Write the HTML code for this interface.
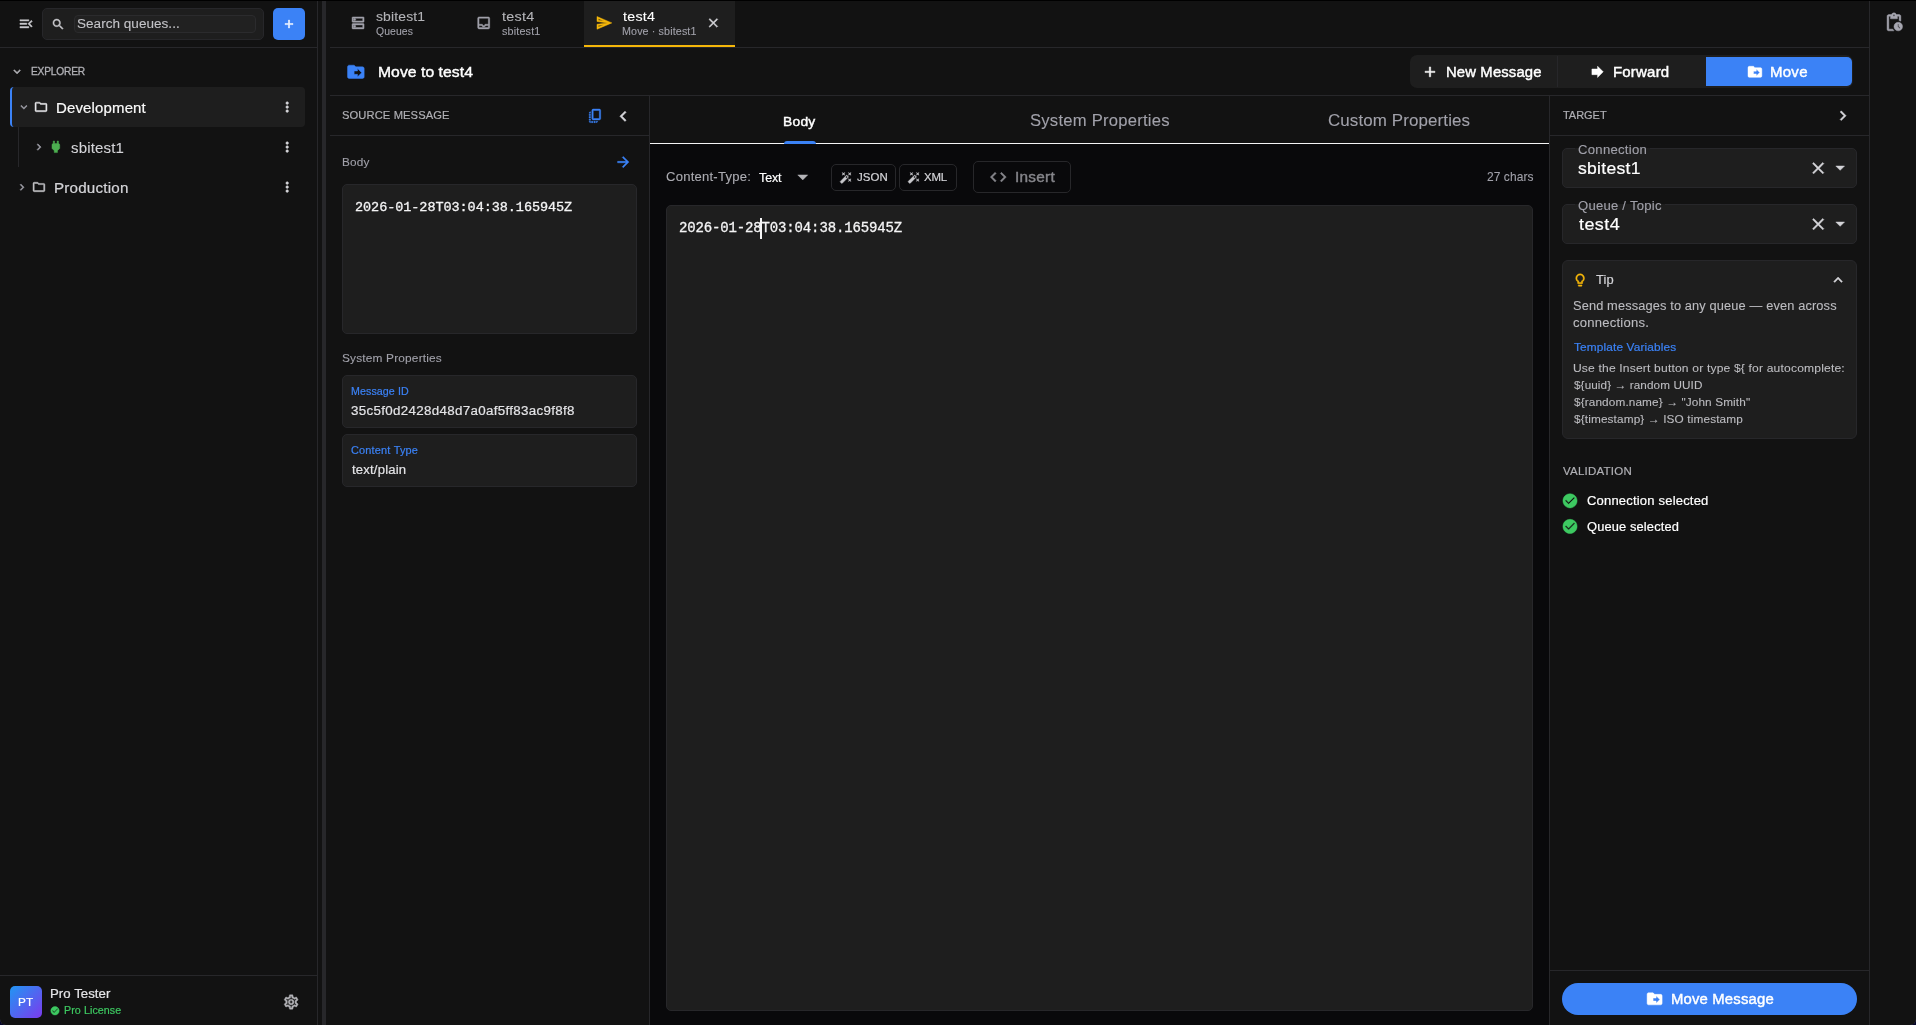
<!DOCTYPE html>
<html lang="en"><head><meta charset="utf-8"><title>Move to test4</title>
<style>
html{margin:0;padding:0;background:#06062a;}
body{margin:0;padding:0;background:#121212;border-radius:0 0 6px 6px;width:1916px;height:1025px;position:relative;overflow:hidden;font-family:"Liberation Sans", sans-serif;color:#fff;}
.b{position:absolute;box-sizing:border-box;}
.t{position:absolute;white-space:pre;line-height:1;margin:0;will-change:transform;}
.m{font-family:"Liberation Mono", monospace;}
svg{position:absolute;display:block;}
.icons path{stroke-width:.45px;vector-effect:non-scaling-stroke;stroke-linejoin:round;}
</style></head><body>
<div class="b" style="left:0px;top:0px;width:1916px;height:1px;background:#000;"></div>
<div class="b" style="left:317px;top:1px;width:1px;height:1024px;background:#27272a;"></div>
<div class="b" style="left:0px;top:47px;width:317px;height:1px;background:#27272a;"></div>
<div class="b" style="left:42px;top:7.5px;width:222px;height:32px;background:#1e1e1e;border:1px solid #27272a;border-radius:5px;"></div>
<div class="b" style="left:73.5px;top:14.5px;width:182px;height:18px;background:#212121;border:1px solid #2b2b2d;border-radius:4px;"></div>
<div class="b" style="left:273px;top:7.5px;width:32px;height:32px;background:#3b82f6;border-radius:5px;"></div>
<div class="b" style="left:10px;top:87px;width:295px;height:40px;background:#1e1e1e;border-radius:4px;border-left:2px solid #3b82f6;"></div>
<div class="b" style="left:18px;top:127px;width:1px;height:40px;background:#27272a;"></div>
<div class="b" style="left:0px;top:975px;width:317px;height:1px;background:#27272a;"></div>
<div class="b" style="left:10px;top:985.5px;width:32px;height:32px;background:linear-gradient(135deg,#2196f3 0%,#7c3aed 100%);border-radius:5px;"></div>
<div class="b" style="left:322px;top:1px;width:4px;height:1024px;background:#27272a;"></div>
<div class="b" style="left:330px;top:47px;width:1539px;height:1px;background:#27272a;"></div>
<div class="b" style="left:584px;top:1px;width:150.5px;height:46px;background:#1e1e1e;"></div>
<div class="b" style="left:584px;top:45px;width:150.5px;height:2px;background:#f5b70a;"></div>
<div class="b" style="left:330px;top:95px;width:1539px;height:1px;background:#27272a;"></div>
<div class="b" style="left:1410px;top:55px;width:443px;height:33px;background:#1e1e1e;border-radius:7px;"></div>
<div class="b" style="left:1557px;top:56px;width:1px;height:31px;background:#27272a;"></div>
<div class="b" style="left:1706px;top:57px;width:146px;height:29px;background:#3b82f6;border-radius:0 5px 5px 0;"></div>
<div class="b" style="left:649px;top:96px;width:1px;height:929px;background:#27272a;"></div>
<div class="b" style="left:330px;top:135px;width:319px;height:1px;background:#27272a;"></div>
<div class="b" style="left:342px;top:184px;width:295px;height:149.5px;background:#1e1e1e;border:1px solid #27272a;border-radius:5px;"></div>
<div class="b" style="left:342px;top:375px;width:295px;height:53px;background:#1e1e1e;border:1px solid #27272a;border-radius:5px;"></div>
<div class="b" style="left:342px;top:434px;width:295px;height:52.5px;background:#1e1e1e;border:1px solid #27272a;border-radius:5px;"></div>
<div class="b" style="left:650px;top:144px;width:899px;height:881px;background:#09090b;"></div>
<div class="b" style="left:650px;top:143px;width:899px;height:1px;background:#f4f4f5;"></div>
<div class="b" style="left:784px;top:141px;width:32px;height:3px;background:#3b82f6;border-radius:3px 3px 0 0;"></div>
<div class="b" style="left:831px;top:164px;width:65px;height:26.5px;border:1px solid #27272a;border-radius:5px;"></div>
<div class="b" style="left:899px;top:164px;width:57.5px;height:26.5px;border:1px solid #27272a;border-radius:5px;"></div>
<div class="b" style="left:973px;top:161px;width:98px;height:32px;border:1px solid #27272a;border-radius:5px;"></div>
<div class="b" style="left:666px;top:205px;width:867px;height:805.5px;background:#1e1e1e;border:1px solid #27272a;border-radius:5px;"></div>
<div class="b" style="left:760px;top:217.5px;width:2px;height:21px;background:#f4f4f5;"></div>
<div class="b" style="left:1549px;top:96px;width:1px;height:929px;background:#27272a;"></div>
<div class="b" style="left:1550px;top:135px;width:319px;height:1px;background:#27272a;"></div>
<div class="b" style="left:1562px;top:148px;width:295px;height:40px;background:#1e1e1e;border:1px solid #27272a;border-radius:5px;"></div>
<div class="b" style="left:1562px;top:204px;width:295px;height:40px;background:#1e1e1e;border:1px solid #27272a;border-radius:5px;"></div>
<div class="b" style="left:1562px;top:260px;width:295px;height:178.5px;background:#1e1e1e;border:1px solid #27272a;border-radius:6px;"></div>
<div class="b" style="left:1550px;top:970px;width:319px;height:1px;background:#27272a;"></div>
<div class="b" style="left:1562px;top:983px;width:295px;height:32px;background:#3b82f6;border-radius:16px;"></div>
<div class="b" style="left:1574.5px;top:148px;width:75px;height:1px;background:#1e1e1e;"></div>
<div class="b" style="left:1574.5px;top:204px;width:90px;height:1px;background:#1e1e1e;"></div>
<div class="b" style="left:1869px;top:1px;width:1px;height:1024px;background:#27272a;"></div>
<div class="b" style="left:-1px;top:1005px;width:21px;height:21px;border:1px solid #55555a;border-top:none;border-right:none;border-radius:0 0 0 7px;"></div>
<div class="b" style="left:1896px;top:1005px;width:21px;height:21px;border:1px solid #55555a;border-top:none;border-left:none;border-radius:0 0 7px 0;"></div>
<svg class="icons" width="1916" height="1025" viewBox="0 0 1916 1025" style="left:0;top:0">
<path fill="#c8c8cc" stroke="#c8c8cc" transform="translate(17.86 15.54) scale(0.6875)" d="M3 18h13v-2H3v2zm0-5h10v-2H3v2zm0-7v2h13V6H3zm18 9.59L17.42 12 21 8.41 19.59 7l-5 5 5 5L21 15.59z"/>
<path fill="#c8c8cc" stroke="#c8c8cc" transform="translate(51.13 17.31) scale(0.5875)" d="M15.5 14h-.79l-.28-.27C15.41 12.59 16 11.11 16 9.5 16 5.91 13.09 3 9.5 3S3 5.91 3 9.5 5.91 16 9.5 16c1.61 0 3.09-.59 4.23-1.57l.27.28v.79l5 4.99L20.49 19l-4.99-5zm-6 0C7.01 14 5 11.99 5 9.5S7.01 5 9.5 5 14 7.01 14 9.5 11.99 14 9.5 14z"/>
<path fill="#fff" stroke="#fff" transform="translate(282.21 17.25) scale(0.5667)" d="M19 13h-6v6h-2v-6H5v-2h6V5h2v6h6v2z"/>
<path fill="#b0b0b5" stroke="#b0b0b5" transform="translate(10.06 64.63) scale(0.5833)" d="M16.59 8.59L12 13.17 7.41 8.59 6 10l6 6 6-6z"/>
<path fill="#a1a1aa" stroke="#a1a1aa" transform="translate(17.4 100.61) scale(0.5417)" d="M16.59 8.59L12 13.17 7.41 8.59 6 10l6 6 6-6z"/>
<path fill="#e4e4e7" stroke="#e4e4e7" transform="translate(33.8 99.73) scale(0.6)" d="M9.17 6l2 2H20v10H4V6h5.17M10 4H4c-1.1 0-1.99.9-1.99 2L2 18c0 1.1.9 2 2 2h16c1.1 0 2-.9 2-2V8c0-1.1-.9-2-2-2h-8l-2-2z"/>
<path fill="#d4d4d8" stroke="#d4d4d8" transform="translate(279.19 99.09) scale(0.6667)" d="M12 8c1.1 0 2-.9 2-2s-.9-2-2-2-2 .9-2 2 .9 2 2 2zm0 2c-1.1 0-2 .9-2 2s.9 2 2 2 2-.9 2-2-.9-2-2-2zm0 6c-1.1 0-2 .9-2 2s.9 2 2 2 2-.9 2-2-.9-2-2-2z"/>
<path fill="#a1a1aa" stroke="#a1a1aa" transform="translate(32.44 140.61) scale(0.5417)" d="M10 6L8.59 7.41 13.17 12l-4.58 4.59L10 18l6-6z"/>
<path fill="#4caf50" stroke="#4caf50" transform="translate(48.1 139.04) scale(0.6458)" d="M16.01 7L16 3h-2v4h-4V3H8v4h-.01C7 6.99 6 7.99 6 8.99v5.49L9.5 18v3h5v-3l3.5-3.51v-5.5c0-1-1-2-1.99-1.99z"/>
<path fill="#d4d4d8" stroke="#d4d4d8" transform="translate(279.19 139.09) scale(0.6667)" d="M12 8c1.1 0 2-.9 2-2s-.9-2-2-2-2 .9-2 2 .9 2 2 2zm0 2c-1.1 0-2 .9-2 2s.9 2 2 2 2-.9 2-2-.9-2-2-2zm0 6c-1.1 0-2 .9-2 2s.9 2 2 2 2-.9 2-2-.9-2-2-2z"/>
<path fill="#a1a1aa" stroke="#a1a1aa" transform="translate(15.46 180.71) scale(0.5417)" d="M10 6L8.59 7.41 13.17 12l-4.58 4.59L10 18l6-6z"/>
<path fill="#c4c4c8" stroke="#c4c4c8" transform="translate(31.85 179.88) scale(0.5917)" d="M9.17 6l2 2H20v10H4V6h5.17M10 4H4c-1.1 0-1.99.9-1.99 2L2 18c0 1.1.9 2 2 2h16c1.1 0 2-.9 2-2V8c0-1.1-.9-2-2-2h-8l-2-2z"/>
<path fill="#d4d4d8" stroke="#d4d4d8" transform="translate(279.19 179.09) scale(0.6667)" d="M12 8c1.1 0 2-.9 2-2s-.9-2-2-2-2 .9-2 2 .9 2 2 2zm0 2c-1.1 0-2 .9-2 2s.9 2 2 2 2-.9 2-2-.9-2-2-2zm0 6c-1.1 0-2 .9-2 2s.9 2 2 2 2-.9 2-2-.9-2-2-2z"/>
<path fill="#3dc961" stroke="#3dc961" transform="translate(49.96 1005.73) scale(0.4208)" d="M12 2C6.48 2 2 6.48 2 12s4.48 10 10 10 10-4.48 10-10S17.52 2 12 2zm-2 15l-5-5 1.41-1.41L10 14.17l7.59-7.59L19 8l-9 9z"/>
<path fill="#b4b4b8" stroke="#b4b4b8" transform="translate(282.56 993.4) scale(0.7167)" d="M19.43 12.98c.04-.32.07-.64.07-.98 0-.34-.03-.66-.07-.98l2.11-1.65c.19-.15.24-.42.12-.64l-2-3.46c-.09-.16-.26-.25-.44-.25-.06 0-.12.01-.17.03l-2.49 1c-.52-.4-1.08-.73-1.69-.98l-.38-2.65C14.46 2.18 14.25 2 14 2h-4c-.25 0-.46.18-.49.42l-.38 2.65c-.61.25-1.17.59-1.69.98l-2.49-1c-.06-.02-.12-.03-.18-.03-.17 0-.34.09-.43.25l-2 3.46c-.13.22-.07.49.12.64l2.11 1.65c-.04.32-.07.65-.07.98 0 .33.03.66.07.98l-2.11 1.65c-.19.15-.24.42-.12.64l2 3.46c.09.16.26.25.44.25.06 0 .12-.01.17-.03l2.49-1c.52.4 1.08.73 1.69.98l.38 2.65c.03.24.24.42.49.42h4c.25 0 .46-.18.49-.42l.38-2.65c.61-.25 1.17-.59 1.69-.98l2.49 1c.06.02.12.03.18.03.17 0 .34-.09.43-.25l2-3.46c.12-.22.07-.49-.12-.64l-2.11-1.65zm-1.98-1.71c.04.31.05.52.05.73 0 .21-.02.43-.05.73l-.14 1.13.89.7 1.08.84-.7 1.21-1.27-.51-1.04-.42-.9.68c-.43.32-.84.56-1.25.73l-1.06.43-.16 1.13-.2 1.35h-1.4l-.19-1.35-.16-1.13-1.06-.43c-.43-.18-.83-.41-1.23-.71l-.91-.7-1.06.43-1.27.51-.7-1.21 1.08-.84.89-.7-.14-1.13c-.03-.31-.05-.54-.05-.74s.02-.43.05-.73l.14-1.13-.89-.7-1.08-.84.7-1.21 1.27.51 1.04.42.9-.68c.43-.32.84-.56 1.25-.73l1.06-.43.16-1.13.2-1.35h1.39l.19 1.35.16 1.13 1.06.43c.43.18.83.41 1.23.71l.91.7 1.06-.43 1.27-.51.7 1.21-1.07.85-.89.7.14 1.13zM12 8c-2.21 0-4 1.79-4 4s1.79 4 4 4 4-1.79 4-4-1.79-4-4-4zm0 6c-1.1 0-2-.9-2-2s.9-2 2-2 2 .9 2 2-.9 2-2 2z"/>
<path fill="#a1a1aa" stroke="#a1a1aa" transform="translate(350.06 14.91) scale(0.6667)" d="M19 15v4H5v-4h14m1-2H4c-.55 0-1 .45-1 1v6c0 .55.45 1 1 1h16c.55 0 1-.45 1-1v-6c0-.55-.45-1-1-1zM7 18.5c-.82 0-1.5-.67-1.5-1.5s.68-1.5 1.5-1.5 1.5.67 1.5 1.5-.67 1.5-1.5 1.5zM19 5v4H5V5h14m1-2H4c-.55 0-1 .45-1 1v6c0 .55.45 1 1 1h16c.55 0 1-.45 1-1V4c0-.55-.45-1-1-1zM7 8.5c-.82 0-1.5-.67-1.5-1.5S6.18 5.5 7 5.5s1.5.68 1.5 1.5S7.83 8.5 7 8.5z"/>
<path fill="#a1a1aa" stroke="#a1a1aa" transform="translate(475.69 14.91) scale(0.6667)" d="M19 3H5c-1.1 0-2 .9-2 2v14c0 1.1.89 2 2 2h14c1.1 0 2-.9 2-2V5c0-1.1-.9-2-2-2zm0 16H5v-3h3.56c.69 1.19 1.97 2 3.45 2s2.75-.81 3.45-2H19v3zm0-5h-4.99c0 1.1-.9 2-2 2s-2-.9-2-2H5V5h14v9z"/>
<path fill="#f5b70a" stroke="#f5b70a" transform="translate(595.57 14.39) scale(0.7083)" d="M4.01 6.03l7.51 3.22-7.52-1 .01-2.22m7.5 8.72L4 17.97v-2.22l7.51-1M2.01 3L2 10l15 2-15 2 .01 7L23 12 2.01 3z"/>
<path fill="#d4d4d8" stroke="#d4d4d8" transform="translate(705.87 15.4) scale(0.625)" d="M19 6.41L17.59 5 12 10.59 6.41 5 5 6.41 10.59 12 5 17.59 6.41 19 12 13.41 17.59 19 19 17.59 13.41 12z"/>
<path fill="#3b82f6" stroke="#3b82f6" transform="translate(345.85 61.83) scale(0.8333)" d="M20 6h-8l-2-2H4c-1.1 0-2 .9-2 2v12c0 1.1.9 2 2 2h16c1.1 0 2-.9 2-2V8c0-1.1-.9-2-2-2zm-6 12v-3h-4v-4h4V8l5 5-5 5z"/>
<path fill="#fff" stroke="#fff" transform="translate(1421.5 63.38) scale(0.7083)" d="M19 13h-6v6h-2v-6H5v-2h6V5h2v6h6v2z"/>
<path fill="#fff" stroke="#fff" transform="translate(1589.07 63.33) scale(0.7083)" d="M12 8V4l8 8-8 8v-4H4V8z"/>
<path fill="#fff" stroke="#fff" transform="translate(1746.62 63.53) scale(0.6917)" d="M20 6h-8l-2-2H4c-1.1 0-2 .9-2 2v12c0 1.1.9 2 2 2h16c1.1 0 2-.9 2-2V8c0-1.1-.9-2-2-2zm-6 12v-3h-4v-4h4V8l5 5-5 5z"/>
<path fill="#3b82f6" stroke="#3b82f6" transform="translate(587.1 107.71) scale(0.6792)" d="M18 2H9c-1.1 0-2 .9-2 2v12c0 1.1.9 2 2 2h9c1.1 0 2-.9 2-2V4c0-1.1-.9-2-2-2zm0 14H9V4h9v12zM3 15v-2h2v2H3zm0-5.5h2v2H3v-2zM10 20h2v2h-2v-2zm-7-1.5v-2h2v2H3zM5 22c-1.1 0-2-.9-2-2h2v2zm3.5 0h-2v-2h2v2zm5 0v-2h2c0 1.1-.9 2-2 2zM5 6v2H3c0-1.1.9-2 2-2z"/>
<path fill="#d4d4d8" stroke="#d4d4d8" transform="translate(613 106) scale(0.8542)" d="M15.41 7.41L14 6l-6 6 6 6 1.41-1.41L10.83 12z"/>
<path fill="#3b82f6" stroke="#3b82f6" transform="translate(614.76 153.58) scale(0.7083)" d="M12 4l-1.41 1.41L16.17 11H4v2h12.17l-5.58 5.59L12 20l8-8z"/>
<path fill="#b4b4b8" stroke="#b4b4b8" transform="translate(790.73 164.9) scale(1)" d="M7 10l5 5 5-5z"/>
<path fill="#c8c8cc" stroke="#c8c8cc" transform="translate(839.63 171.58) scale(0.5167)" d="M7.5 5.6L10 7 8.6 4.5 10 2 7.5 3.4 5 2l1.4 2.5L5 7zm12 9.8L17 14l1.4 2.5L17 19l2.5-1.4L22 19l-1.4-2.5L22 14zM22 2l-2.5 1.4L17 2l1.4 2.5L17 7l2.5-1.4L22 7l-1.4-2.5zm-7.63 5.29c-.39-.39-1.02-.39-1.41 0L1.29 18.96c-.39.39-.39 1.02 0 1.41l2.34 2.34c.39.39 1.02.39 1.41 0L16.7 11.05c.39-.39.39-1.02 0-1.41l-2.33-2.35zm-1.03 5.49l-2.12-2.12 2.44-2.44 2.12 2.12-2.44 2.44z"/>
<path fill="#c8c8cc" stroke="#c8c8cc" transform="translate(907.62 171.54) scale(0.5167)" d="M7.5 5.6L10 7 8.6 4.5 10 2 7.5 3.4 5 2l1.4 2.5L5 7zm12 9.8L17 14l1.4 2.5L17 19l2.5-1.4L22 19l-1.4-2.5L22 14zM22 2l-2.5 1.4L17 2l1.4 2.5L17 7l2.5-1.4L22 7l-1.4-2.5zm-7.63 5.29c-.39-.39-1.02-.39-1.41 0L1.29 18.96c-.39.39-.39 1.02 0 1.41l2.34 2.34c.39.39 1.02.39 1.41 0L16.7 11.05c.39-.39.39-1.02 0-1.41l-2.33-2.35zm-1.03 5.49l-2.12-2.12 2.44-2.44 2.12 2.12-2.44 2.44z"/>
<path fill="#85858a" stroke="#85858a" transform="translate(988.68 167.5) scale(0.8)" d="M9.4 16.6L4.8 12l4.6-4.6L8 6l-6 6 6 6 1.4-1.4zm5.2 0l4.6-4.6-4.6-4.6L16 6l6 6-6 6-1.4-1.4z"/>
<path fill="#d4d4d8" stroke="#d4d4d8" transform="translate(1833.14 105.96) scale(0.8125)" d="M10 6L8.59 7.41 13.17 12l-4.58 4.59L10 18l6-6z"/>
<path fill="#d4d4d8" stroke="#d4d4d8" transform="translate(1808.45 158.41) scale(0.8125)" d="M19 6.41L17.59 5 12 10.59 6.41 5 5 6.41 10.59 12 5 17.59 6.41 19 12 13.41 17.59 19 19 17.59 13.41 12z"/>
<path fill="#d4d4d8" stroke="#d4d4d8" transform="translate(1829.66 157.24) scale(0.875)" d="M7 10l5 5 5-5z"/>
<path fill="#d4d4d8" stroke="#d4d4d8" transform="translate(1808.45 214.41) scale(0.8125)" d="M19 6.41L17.59 5 12 10.59 6.41 5 5 6.41 10.59 12 5 17.59 6.41 19 12 13.41 17.59 19 19 17.59 13.41 12z"/>
<path fill="#d4d4d8" stroke="#d4d4d8" transform="translate(1829.66 213.24) scale(0.875)" d="M7 10l5 5 5-5z"/>
<path fill="#f5b70a" stroke="#f5b70a" transform="translate(1572.62 272.57) scale(0.625)" d="M9 21c0 .55.45 1 1 1h4c.55 0 1-.45 1-1v-1H9v1zm3-19C8.14 2 5 5.14 5 9c0 2.38 1.19 4.47 3 5.74V17c0 .55.45 1 1 1h6c.55 0 1-.45 1-1v-2.26c1.81-1.27 3-3.36 3-5.74 0-3.86-3.14-7-7-7zm2.85 11.1l-.85.6V16h-4v-2.3l-.85-.6C7.8 12.16 7 10.63 7 9c0-2.76 2.24-5 5-5s5 2.24 5 5c0 1.63-.8 3.16-2.15 4.1z"/>
<path fill="#d4d4d8" stroke="#d4d4d8" transform="translate(1829.33 271.17) scale(0.7292)" d="M12 8l-6 6 1.41 1.41L12 10.83l4.59 4.58L18 14z"/>
<path fill="#3dc961" stroke="#3dc961" transform="translate(1561.52 492.32) scale(0.7083)" d="M12 2C6.48 2 2 6.48 2 12s4.48 10 10 10 10-4.48 10-10S17.52 2 12 2zm-2 15l-5-5 1.41-1.41L10 14.17l7.59-7.59L19 8l-9 9z"/>
<path fill="#3dc961" stroke="#3dc961" transform="translate(1561.51 517.93) scale(0.7083)" d="M12 2C6.48 2 2 6.48 2 12s4.48 10 10 10 10-4.48 10-10S17.52 2 12 2zm-2 15l-5-5 1.41-1.41L10 14.17l7.59-7.59L19 8l-9 9z"/>
<path fill="#fff" stroke="#fff" transform="translate(1645.6 989.85) scale(0.75)" d="M20 6h-8l-2-2H4c-1.1 0-2 .9-2 2v12c0 1.1.9 2 2 2h16c1.1 0 2-.9 2-2V8c0-1.1-.9-2-2-2zm-6 12v-3h-4v-4h4V8l5 5-5 5z"/>
<path fill="#a6a6b0" stroke="#a6a6b0" transform="translate(1883.66 11.96) scale(0.8583)" d="M17 12c-2.76 0-5 2.24-5 5s2.24 5 5 5 5-2.24 5-5-2.24-5-5-5zm1.65 7.35L16.5 17.2V14h1v2.79l1.85 1.85-.7.71zM18 3h-3.18C14.4 1.84 13.3 1 12 1s-2.4.84-2.82 2H6c-1.1 0-2 .9-2 2v15c0 1.1.9 2 2 2h6.11c-.59-.57-1.07-1.25-1.42-2H6V5h2v3h8V5h2v5.08c.71.1 1.38.31 2 .6V5c0-1.1-.9-2-2-2zm-6 2c-.55 0-1-.45-1-1s.45-1 1-1 1 .45 1 1-.45 1-1 1z"/>
</svg>
<div class="t" style="left:77.34px;top:17px;font-size:13.52px;font-weight:400;color:#c4c4c8;letter-spacing:0.034px;-webkit-text-stroke:0.1px #c4c4c8;">Search queues...</div>
<div class="t" style="left:31.21px;top:67px;font-size:10.2px;font-weight:400;color:#b0b0b5;letter-spacing:-0.201px;-webkit-text-stroke:0.3px #b0b0b5;">EXPLORER</div>
<div class="t" style="left:55.66px;top:101.02px;font-size:14.56px;font-weight:400;color:#fafafa;letter-spacing:0.153px;transform:scaleX(1.0293);transform-origin:1.19px 0;-webkit-text-stroke:0.2px #fafafa;">Development</div>
<div class="t" style="left:71.44px;top:141.02px;font-size:14.56px;font-weight:400;color:#d4d4d8;letter-spacing:0.146px;transform:scaleX(1.0326);transform-origin:0.41px 0;-webkit-text-stroke:0.1px #d4d4d8;">sbitest1</div>
<div class="t" style="left:53.66px;top:181.02px;font-size:14.56px;font-weight:400;color:#d4d4d8;letter-spacing:0.202px;transform:scaleX(1.0439);transform-origin:1.19px 0;-webkit-text-stroke:0.2px #d4d4d8;">Production</div>
<div class="t" style="left:17.91px;top:997px;font-size:11.44px;font-weight:400;color:#fff;letter-spacing:0.278px;transform:scaleX(1.0277);transform-origin:0.94px 0;-webkit-text-stroke:0.2px #fff;">PT</div>
<div class="t" style="left:49.53px;top:987px;font-size:13px;font-weight:400;color:#e4e4e7;letter-spacing:0.052px;transform:scaleX(1.0154);transform-origin:1.07px 0;-webkit-text-stroke:0.2px #e4e4e7;">Pro Tester</div>
<div class="t" style="left:63.9px;top:1006.01px;font-size:10.4px;font-weight:400;color:#3dc961;letter-spacing:0.082px;transform:scaleX(1.0278);transform-origin:0.85px 0;-webkit-text-stroke:0.2px #3dc961;">Pro License</div>
<div class="t" style="left:376.47px;top:10px;font-size:13.52px;font-weight:400;color:#b4b4b8;letter-spacing:0.151px;transform:scaleX(1.0315);transform-origin:0.38px 0;-webkit-text-stroke:0.1px #b4b4b8;">sbitest1</div>
<div class="t" style="left:376.36px;top:27px;font-size:10.4px;font-weight:400;color:#a1a1aa;letter-spacing:0.106px;-webkit-text-stroke:0.1px #a1a1aa;">Queues</div>
<div class="t" style="left:502.25px;top:10px;font-size:13.52px;font-weight:400;color:#b4b4b8;letter-spacing:0.261px;transform:scaleX(1.0632);transform-origin:0.2px 0;-webkit-text-stroke:0.1px #b4b4b8;">test4</div>
<div class="t" style="left:502.16px;top:27px;font-size:10.4px;font-weight:400;color:#a1a1aa;letter-spacing:0.154px;transform:scaleX(1.04);transform-origin:0.29px 0;-webkit-text-stroke:0.1px #a1a1aa;">sbitest1</div>
<div class="t" style="left:622.65px;top:10px;font-size:13.52px;font-weight:400;color:#fff;letter-spacing:0.255px;transform:scaleX(1.055);transform-origin:0.2px 0;-webkit-text-stroke:0.1px #fff;">test4</div>
<div class="t" style="left:622px;top:27px;font-size:10.4px;font-weight:400;color:#a1a1aa;letter-spacing:0.116px;transform:scaleX(1.0333);transform-origin:0.85px 0;-webkit-text-stroke:0.1px #a1a1aa;">Move · sbitest1</div>
<div class="t" style="left:378.48px;top:64px;font-size:15.45px;font-weight:400;color:#fff;letter-spacing:0.056px;transform:scaleX(1.0165);transform-origin:1.27px 0;-webkit-text-stroke:0.42px #fff;">Move to test4</div>
<div class="t" style="left:1445.67px;top:65.01px;font-size:14.42px;font-weight:400;color:#fff;letter-spacing:0.147px;transform:scaleX(1.0299);transform-origin:1.18px 0;-webkit-text-stroke:0.42px #fff;">New Message</div>
<div class="t" style="left:1613.17px;top:65.01px;font-size:14.42px;font-weight:400;color:#fff;letter-spacing:0.196px;transform:scaleX(1.0417);transform-origin:1.18px 0;-webkit-text-stroke:0.42px #fff;">Forward</div>
<div class="t" style="left:1770.17px;top:65.01px;font-size:14.42px;font-weight:400;color:#fff;letter-spacing:0.281px;transform:scaleX(1.0407);transform-origin:1.18px 0;-webkit-text-stroke:0.42px #fff;">Move</div>
<div class="t" style="left:342.25px;top:110.01px;font-size:11px;font-weight:400;color:#b0b0b5;letter-spacing:0.105px;transform:scaleX(1.0157);transform-origin:0.5px 0;-webkit-text-stroke:0.18px #b0b0b5;">SOURCE MESSAGE</div>
<div class="t" style="left:341.81px;top:157.01px;font-size:11.44px;font-weight:400;color:#a1a1aa;letter-spacing:0.216px;transform:scaleX(1.0295);transform-origin:0.94px 0;-webkit-text-stroke:0.1px #a1a1aa;">Body</div>
<div class="t m" style="left:354.9px;top:201.01px;font-size:13.5px;font-weight:400;color:#f4f4f5;letter-spacing:-0.059px;-webkit-text-stroke:0.3px #f4f4f5;">2026-01-28T03:04:38.165945Z</div>
<div class="t" style="left:342.23px;top:353.01px;font-size:11.44px;font-weight:400;color:#a1a1aa;letter-spacing:0.166px;transform:scaleX(1.0384);transform-origin:0.52px 0;-webkit-text-stroke:0.1px #a1a1aa;">System Properties</div>
<div class="t" style="left:351.1px;top:387px;font-size:10.4px;font-weight:400;color:#3b82f6;letter-spacing:0.087px;transform:scaleX(1.0259);transform-origin:0.85px 0;-webkit-text-stroke:0.2px #3b82f6;">Message ID</div>
<div class="t" style="left:351.47px;top:405.01px;font-size:12.48px;font-weight:400;color:#e4e4e7;letter-spacing:0.292px;transform:scaleX(1.0717);transform-origin:0.48px 0;-webkit-text-stroke:0.18px #e4e4e7;">35c5f0d2428d48d7a0af5ff83ac9f8f8</div>
<div class="t" style="left:351.42px;top:446px;font-size:10.4px;font-weight:400;color:#3b82f6;letter-spacing:0.181px;transform:scaleX(1.0522);transform-origin:0.53px 0;-webkit-text-stroke:0.2px #3b82f6;">Content Type</div>
<div class="t" style="left:351.76px;top:464px;font-size:12.48px;font-weight:400;color:#e4e4e7;letter-spacing:0.172px;transform:scaleX(1.0528);transform-origin:0.19px 0;-webkit-text-stroke:0.18px #e4e4e7;">text/plain</div>
<div class="t" style="left:783.35px;top:115px;font-size:13.39px;font-weight:400;color:#fff;letter-spacing:0.241px;transform:scaleX(1.0359);transform-origin:1.1px 0;-webkit-text-stroke:0.42px #fff;">Body</div>
<div class="t" style="left:1030.09px;top:113.02px;font-size:16.64px;font-weight:400;color:#a1a1aa;letter-spacing:0.229px;-webkit-text-stroke:0.1px #a1a1aa;">System Properties</div>
<div class="t" style="left:1328.1px;top:113.02px;font-size:16.64px;font-weight:400;color:#a1a1aa;letter-spacing:0.107px;transform:scaleX(1.0191);transform-origin:0.84px 0;-webkit-text-stroke:0.1px #a1a1aa;">Custom Properties</div>
<div class="t" style="left:666.22px;top:171px;font-size:12.48px;font-weight:400;color:#acacb2;letter-spacing:0.211px;transform:scaleX(1.0494);transform-origin:0.63px 0;-webkit-text-stroke:0.1px #acacb2;">Content-Type:</div>
<div class="t" style="left:759.07px;top:172.01px;font-size:12.48px;font-weight:400;color:#fff;letter-spacing:-0.099px;-webkit-text-stroke:0.2px #fff;">Text</div>
<div class="t" style="left:856.67px;top:172.01px;font-size:11.44px;font-weight:400;color:#d4d4d8;letter-spacing:0.066px;-webkit-text-stroke:0.2px #d4d4d8;">JSON</div>
<div class="t" style="left:924.29px;top:172.01px;font-size:11.44px;font-weight:400;color:#d4d4d8;letter-spacing:-0.235px;-webkit-text-stroke:0.2px #d4d4d8;">XML</div>
<div class="t" style="left:1014.52px;top:170.02px;font-size:14.42px;font-weight:400;color:#85858a;letter-spacing:0.263px;transform:scaleX(1.065);transform-origin:1.33px 0;-webkit-text-stroke:0.42px #85858a;">Insert</div>
<div class="t" style="left:1487.45px;top:172px;font-size:11.96px;font-weight:400;color:#a1a1aa;letter-spacing:0.083px;-webkit-text-stroke:0.1px #a1a1aa;">27 chars</div>
<div class="t m" style="left:679.12px;top:221.01px;font-size:14px;font-weight:400;color:#f4f4f5;letter-spacing:-0.144px;-webkit-text-stroke:0.3px #f4f4f5;">2026-01-28T03:04:38.165945Z</div>
<div class="t" style="left:1562.9px;top:110.01px;font-size:11px;font-weight:400;color:#b0b0b5;letter-spacing:-0.039px;-webkit-text-stroke:0.18px #b0b0b5;">TARGET</div>
<div class="t" style="left:1578.12px;top:144px;font-size:12.48px;font-weight:400;color:#a1a1aa;letter-spacing:0.248px;transform:scaleX(1.0547);transform-origin:0.63px 0;-webkit-text-stroke:0.1px #a1a1aa;">Connection</div>
<div class="t" style="left:1578.29px;top:161.01px;font-size:16.64px;font-weight:400;color:#fff;letter-spacing:0.286px;transform:scaleX(1.0542);transform-origin:0.46px 0;-webkit-text-stroke:0.2px #fff;">sbitest1</div>
<div class="t" style="left:1578.16px;top:200px;font-size:12.48px;font-weight:400;color:#a1a1aa;letter-spacing:0.226px;transform:scaleX(1.0508);transform-origin:0.59px 0;-webkit-text-stroke:0.1px #a1a1aa;">Queue / Topic</div>
<div class="t" style="left:1578.5px;top:217.01px;font-size:16.64px;font-weight:400;color:#fff;letter-spacing:0.398px;transform:scaleX(1.0798);transform-origin:0.25px 0;-webkit-text-stroke:0.2px #fff;">test4</div>
<div class="t" style="left:1595.97px;top:274.01px;font-size:12.48px;font-weight:400;color:#d4d4d8;letter-spacing:0.091px;transform:scaleX(1.0372);transform-origin:0.28px 0;-webkit-text-stroke:0.18px #d4d4d8;">Tip</div>
<div class="t" style="left:1573.38px;top:300px;font-size:12.48px;font-weight:400;color:#bcbcc0;letter-spacing:0.123px;transform:scaleX(1.0279);transform-origin:0.57px 0;-webkit-text-stroke:0.1px #bcbcc0;">Send messages to any queue — even across</div>
<div class="t" style="left:1573.42px;top:317px;font-size:12.48px;font-weight:400;color:#bcbcc0;letter-spacing:0.204px;transform:scaleX(1.0493);transform-origin:0.53px 0;-webkit-text-stroke:0.1px #bcbcc0;">connections.</div>
<div class="t" style="left:1573.69px;top:342.01px;font-size:11.44px;font-weight:400;color:#3b82f6;letter-spacing:0.131px;transform:scaleX(1.0358);transform-origin:0.26px 0;-webkit-text-stroke:0.2px #3b82f6;">Template Variables</div>
<div class="t" style="left:1573.07px;top:363px;font-size:11.44px;font-weight:400;color:#bcbcc0;letter-spacing:0.173px;transform:scaleX(1.0544);transform-origin:0.88px 0;-webkit-text-stroke:0.1px #bcbcc0;">Use the Insert button or type ${ for autocomplete:</div>
<div class="t" style="left:1573.83px;top:380px;font-size:11.44px;font-weight:400;color:#bcbcc0;letter-spacing:0.108px;transform:scaleX(1.023);transform-origin:0.12px 0;-webkit-text-stroke:0.1px #bcbcc0;">${uuid} → random UUID</div>
<div class="t" style="left:1573.83px;top:397.01px;font-size:11.44px;font-weight:400;color:#bcbcc0;letter-spacing:0.12px;transform:scaleX(1.0294);transform-origin:0.12px 0;-webkit-text-stroke:0.1px #bcbcc0;">${random.name} → &quot;John Smith&quot;</div>
<div class="t" style="left:1573.83px;top:414.01px;font-size:11.44px;font-weight:400;color:#bcbcc0;letter-spacing:0.13px;transform:scaleX(1.0311);transform-origin:0.12px 0;-webkit-text-stroke:0.1px #bcbcc0;">${timestamp} → ISO timestamp</div>
<div class="t" style="left:1562.8px;top:466px;font-size:11px;font-weight:400;color:#b0b0b5;letter-spacing:0.223px;transform:scaleX(1.0458);transform-origin:0.05px 0;-webkit-text-stroke:0.18px #b0b0b5;">VALIDATION</div>
<div class="t" style="left:1586.52px;top:495px;font-size:12.48px;font-weight:400;color:#fff;letter-spacing:0.172px;transform:scaleX(1.0453);transform-origin:0.63px 0;-webkit-text-stroke:0.2px #fff;">Connection selected</div>
<div class="t" style="left:1586.56px;top:521.01px;font-size:12.48px;font-weight:400;color:#fff;letter-spacing:0.123px;transform:scaleX(1.0333);transform-origin:0.59px 0;-webkit-text-stroke:0.2px #fff;">Queue selected</div>
<div class="t" style="left:1670.67px;top:992.02px;font-size:14.42px;font-weight:400;color:#fff;letter-spacing:0.164px;transform:scaleX(1.0322);transform-origin:1.18px 0;-webkit-text-stroke:0.42px #fff;">Move Message</div>
</body></html>
